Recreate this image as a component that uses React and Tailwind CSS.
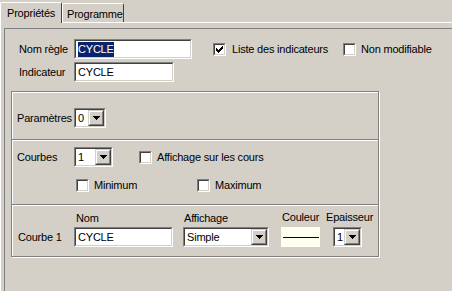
import React from "react";

function Sunken({ className = "", inner = "bg-white", children }) {
  return (
    <div className={`border border-t-[#808080] border-l-[#808080] border-b-white border-r-white ${className}`}>
      <div className={`h-full w-full border border-t-[#404040] border-l-[#404040] border-b-[#d4d0c8] border-r-[#d4d0c8] ${inner}`}>
        {children}
      </div>
    </div>
  );
}

function Check({ checked }) {
  return (
    <Sunken className="w-[13px] h-[13px] shrink-0">
      {checked && (
        <div className="flex h-full w-full items-center justify-center">
          <svg width="7" height="7" viewBox="0 0 7 7" shapeRendering="crispEdges">
            <path d="M6 0h1v3h-1zM5 1h1v3h-1zM4 2h1v3h-1zM3 3h1v3h-1zM2 4h1v3h-1zM1 3h1v3h-1zM0 2h1v3h-1z" fill="#000" />
          </svg>
        </div>
      )}
    </Sunken>
  );
}

function Combo({ value, className = "" }) {
  return (
    <Sunken className={`h-[20px] shrink-0 ${className}`}>
      <div className="flex h-full items-center">
        <span className="flex-1 pl-[2px] leading-none">{value}</span>
        <div className="h-[16px] w-[16px] border border-t-[#d4d0c8] border-l-[#d4d0c8] border-b-[#404040] border-r-[#404040]">
          <div className="flex h-full w-full items-center justify-center border border-t-white border-l-white border-b-[#808080] border-r-[#808080] bg-[#d4d0c8]">
            <svg width="7" height="4" viewBox="0 0 7 4" shapeRendering="crispEdges">
              <path d="M0 0h7v1h-7zM1 1h5v1h-5zM2 2h3v1h-3zM3 3h1v1h-1z" fill="#000" />
            </svg>
          </div>
        </div>
      </div>
    </Sunken>
  );
}

function Field({ value, className = "", selected }) {
  return (
    <Sunken className={`h-[20px] shrink-0 ${className}`}>
      <div className="flex h-full items-center pl-[2px] leading-none">
        {selected ? <span className="bg-[#0a246a] py-[2px] text-white">{value}</span> : value}
      </div>
    </Sunken>
  );
}

function Divider() {
  return <div className="h-[2px] border-t border-b border-t-[#808080] border-b-white" />;
}

export default function App() {
  return (
    <div className="w-[452px] h-[291px] overflow-hidden bg-[#d4d0c8] text-[11px] tracking-[-0.2px] whitespace-nowrap text-black font-['Liberation_Sans',Arial,sans-serif] flex flex-col">
      {/* tabs */}
      <div className="flex h-[22px] items-end">
        <div className="relative z-10 -mb-px flex h-[21px] w-[62px] items-start rounded-t-[2px] border-t border-l border-r border-t-white border-l-white border-r-[#404040] bg-[#d4d0c8] pl-[6px] pt-[2px]">
          Propriétés
        </div>
        <div className="flex h-[19px] w-[62px] items-start rounded-t-[2px] border-t border-l border-r border-t-white border-l-white border-r-[#404040] pl-[4px] pt-[2px]">
          Programme
        </div>
      </div>

      {/* tab page */}
      <div className="flex flex-1 flex-col border-t border-l border-white">
        <div className="ml-[3px] mt-[5px] flex flex-1 flex-col border-t border-l border-[#808080]">
          <div className="mt-[10px] flex h-[20px] items-center pl-[14px]">
            <span className="w-[55px] min-w-0">Nom règle</span>
            <Field value="CYCLE" className="w-[118px]" selected />
            <div className="ml-[21px] flex w-[130px] items-center gap-[6px]">
              <Check checked />
              <span>Liste des indicateurs</span>
            </div>
            <div className="flex items-center gap-[5px]">
              <Check />
              <span>Non modifiable</span>
            </div>
          </div>
          <div className="mt-[3px] flex h-[20px] items-center pl-[14px]">
            <span className="w-[55px] min-w-0">Indicateur</span>
            <Field value="CYCLE" className="w-[100px]" />
          </div>

          {/* group */}
          <div className="ml-[6px] mt-[9px] w-[368px] h-[166px] border border-[#808080] shadow-[1px_1px_0_#fff,inset_1px_1px_0_#fff] pt-px">
            <div className="flex h-[46px] items-start pl-[5px] pt-[15px]">
              <span className="w-[57px] min-w-0 leading-[20px]">Paramètres</span>
              <Combo value="0" className="w-[32px]" />
            </div>
            <Divider />
            <div className="h-[63px] pl-[5px] pt-[6px]">
              <div className="flex h-[20px] items-center">
                <span className="w-[57px] min-w-0">Courbes</span>
                <Combo value="1" className="w-[39px]" />
                <div className="ml-[26px] flex items-center gap-[5px]">
                  <Check />
                  <span>Affichage sur les cours</span>
                </div>
              </div>
              <div className="mt-[10px] flex h-[16px] items-center">
                <div className="ml-[59px] flex w-[121px] items-center gap-[5px]">
                  <Check />
                  <span>Minimum</span>
                </div>
                <div className="flex items-center gap-[5px]">
                  <Check />
                  <span>Maximum</span>
                </div>
              </div>
            </div>
            <Divider />
            <div className="flex h-[50px] items-start pl-[6px] pt-[6px]">
              <span className="mt-[15px] w-[56px] min-w-0 leading-[20px]">Courbe 1</span>
              <div className="flex w-[99px] flex-col">
                <span className="h-[15px] pl-[2px] leading-[13px]">Nom</span>
                <Field value="CYCLE" className="w-[99px]" />
              </div>
              <div className="ml-[10px] flex w-[86px] flex-col">
                <span className="h-[15px] pl-px leading-[13px]">Affichage</span>
                <Combo value="Simple" className="w-[86px]" />
              </div>
              <div className="ml-[12px] flex w-[39px] flex-col">
                <span className="h-[15px] pl-px leading-[11px]">Couleur</span>
                <div className="flex h-[20px] items-center justify-center bg-[#fffff0]">
                  <div className="h-px w-[36px] bg-[#000033]" />
                </div>
              </div>
              <div className="ml-[6px] flex w-[48px] flex-col">
                <span className="h-[15px] leading-[11px]">Epaisseur</span>
                <Combo value="1" className="ml-[7px] w-[29px]" />
              </div>
            </div>
          </div>
        </div>
      </div>
    </div>
  );
}
